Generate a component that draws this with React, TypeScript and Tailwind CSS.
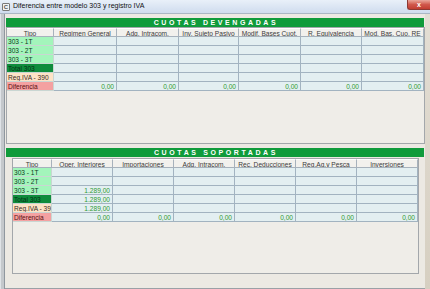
import React from 'react'

const topCols = ['Tipo', 'Regimen General', 'Adq. Intracom.', 'Inv. Sujeto Pasivo', 'Modif. Bases Cuot.', 'R. Equivalencia', 'Mod. Bas. Cuo. RE']
const botCols = ['Tipo', 'Oper. Interiores', 'Importaciones', 'Adq. Intracom.', 'Rec. Deducciones', 'Reg.Ag.y Pesca', 'Inversiones']

const tipoStyles = [
  'bg-[#a3f5bb] text-[#0d3a1c]',
  'bg-[#a3f5bb] text-[#0d3a1c]',
  'bg-[#a3f5bb] text-[#0d3a1c]',
  'bg-[#0f8c3c] text-[#063015]',
  'bg-[#fde3c6] text-[#3a2a1a]',
  'bg-[#f4a1a1] text-[#5a1010]',
]

type Row = { tipo: string; values: string[] }

const topRows: Row[] = [
  { tipo: '303 - 1T', values: ['', '', '', '', '', ''] },
  { tipo: '303 - 2T', values: ['', '', '', '', '', ''] },
  { tipo: '303 - 3T', values: ['', '', '', '', '', ''] },
  { tipo: 'Total 303', values: ['', '', '', '', '', ''] },
  { tipo: 'Reg.IVA - 390', values: ['', '', '', '', '', ''] },
  { tipo: 'Diferencia', values: ['0,00', '0,00', '0,00', '0,00', '0,00', '0,00'] },
]

const botRows: Row[] = [
  { tipo: '303 - 1T', values: ['', '', '', '', '', ''] },
  { tipo: '303 - 2T', values: ['', '', '', '', '', ''] },
  { tipo: '303 - 3T', values: ['1.289,00', '', '', '', '', ''] },
  { tipo: 'Total 303', values: ['1.289,00', '', '', '', '', ''] },
  { tipo: 'Reg.IVA - 39', values: ['1.289,00', '', '', '', '', ''] },
  { tipo: 'Diferencia', values: ['0,00', '0,00', '0,00', '0,00', '0,00', '0,00'] },
]

const Grid = ({ cols, rows, widths }: { cols: string[]; rows: Row[]; widths: string }) => (
  <div className={`grid ${widths} auto-rows-[9px] leading-[9px] text-[6.6px]`}>
    {cols.map(c => (
      <div
        key={c}
        className="bg-[#f2f1ed] text-[#3a3a3a] text-center border-r border-b border-[#a7b2bc] border-t border-t-white whitespace-nowrap overflow-hidden"
      >
        {c}
      </div>
    ))}
    {rows.map((r, i) => (
      <React.Fragment key={r.tipo}>
        <div className={`${tipoStyles[i]} pl-[1px] border-b border-r border-[#c9d6d2] whitespace-nowrap overflow-hidden`}>
          {r.tipo}
        </div>
        {r.values.map((v, j) => (
          <div
            key={j}
            className="bg-[#e3eff1] text-[#2f9a36] text-right pr-[2px] border-r border-b border-[#a2b3c0]"
          >
            {v}
          </div>
        ))}
      </React.Fragment>
    ))}
  </div>
)

const GreenBar = ({ label }: { label: string }) => (
  <div className="h-[9px] w-[418px] ml-[1px] bg-[#0f9b3b] flex items-center justify-center text-white font-bold tracking-[2.6px] leading-[9px] text-[7px] pl-[2px]">
    {label}
  </div>
)

export default function App() {
  return (
    <div className="w-[430px] h-[289px] overflow-hidden bg-[#ece9e3] text-[7px] font-['Liberation_Sans',Arial,sans-serif] flex flex-col">
      <div className="h-[14px] shrink-0 flex items-center bg-gradient-to-b from-[#e9f0f9] to-[#cfdcee] border-b border-[#aab6c4] relative">
        <div className="ml-[2px] w-[8px] h-[8px] border border-[#7a7a7a] bg-[#f3f3f3] rounded-[1px] text-[6px] leading-[6px] text-center text-[#555] font-bold">
          C
        </div>
        <span className="ml-[3px] text-[#111] text-[7px]">
          Diferencia entre modelo 303 y registro IVA
        </span>
        <div className="ml-auto self-start w-[23px] h-[10px] rounded-bl-[3px] bg-gradient-to-b from-[#e9a79c] via-[#d0584c] to-[#c23d31] border border-[#8d3a33] border-t-0 border-r-0 flex items-center justify-center text-white font-bold text-[7px] leading-[7px]">
          x
        </div>
      </div>
      <div className="flex flex-1">
        <div className="w-[5px] bg-[#c4c8cc] border-r border-[#8f979f] border-l border-l-[#dfe3e7]" />
        <div className="w-[420px] flex flex-col pt-[4px]">
          <GreenBar label="CUOTAS DEVENGADAS" />
          <div className="w-[419px] ml-[1px] h-[117px] border border-[#a3a7ab] bg-[#efede8]">
            <Grid cols={topCols} rows={topRows} widths="grid-cols-[47px_63px_62px_60px_62px_61px_62px]" />
          </div>
          <div className="mt-[4px]">
            <GreenBar label="CUOTAS SOPORTADAS" />
          </div>
          <div className="w-[407px] ml-[7px] mt-[1px] h-[116px] border border-[#a3a7ab] bg-[#efede8]">
            <Grid cols={botCols} rows={botRows} widths="grid-cols-[39px_61px_61px_61px_61px_61px_61px]" />
          </div>
          <div className="flex-1" />
          <div className="h-[1px] bg-[#9aa0a6]" />
        </div>
        <div className="flex-1 bg-gradient-to-b from-[#e3ded4] to-[#d6cfc1]" />
      </div>
    </div>
  )
}
